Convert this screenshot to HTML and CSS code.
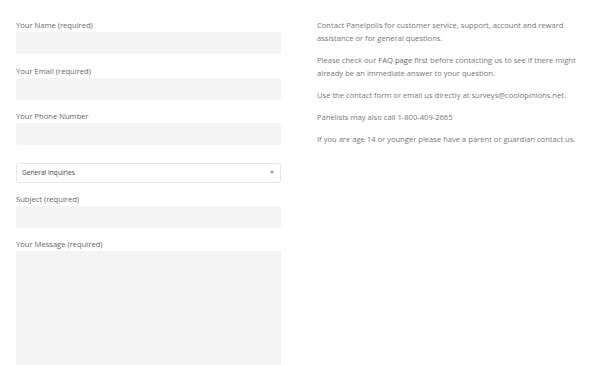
FILE: index.html
```html
<!DOCTYPE html>
<html>
<head>
<meta charset="utf-8">
<link rel="stylesheet" href="styles.css">
</head>
<body>
<div class="page">
  <form class="form">
    <div class="field">
      <label class="label">Your Name (required)</label>
      <div class="input"></div>
    </div>
    <div class="field">
      <label class="label">Your Email (required)</label>
      <div class="input"></div>
    </div>
    <div class="field">
      <label class="label">Your Phone Number</label>
      <div class="input"></div>
    </div>
    <div class="select">
      <span>General Inquiries</span>
      <span class="caret"></span>
    </div>
    <div class="field">
      <label class="label">Subject (required)</label>
      <div class="input"></div>
    </div>
    <div class="field">
      <label class="label">Your Message (required)</label>
      <div class="textarea"></div>
    </div>
  </form>
  <div class="info">
    <p>Contact Panelpolls for customer service, support, account and reward assistance or for general questions.</p>
    <p>Please check our <a class="link">FAQ page</a> first before contacting us to see if there might already be an immediate answer to your question.</p>
    <p>Use the contact form or email us directly at surveys@coolopinions.net.</p>
    <p>Panelists may also call 1-800-409-2665</p>
    <p>If you are age 14 or younger please have a parent or guardian contact us.</p>
  </div>
</div>
</body>
</html>
```
FILE: styles.css
```css
html, body {
  margin: 0;
  padding: 0;
  background: #fff;
  overflow: hidden;
  height: 365px;
}
body {
  font-family: "Open Sans", "Liberation Sans", sans-serif;
  font-size: 7.6px;
  color: #666;
}
.page {
  display: flex;
  padding: 19px 0 0 16px;
  gap: 36px;
}
.form {
  width: 265px;
  display: flex;
  flex-direction: column;
  flex-shrink: 0;
}
.field {
  display: flex;
  flex-direction: column;
  margin-bottom: 10.5px;
}
.label {
  line-height: 13px;
  color: #666;
}
.input {
  height: 22px;
  background: #f4f4f4;
  border-radius: 2px;
}
.textarea {
  height: 130px;
  background: #f4f4f4;
}
.select {
  height: 18px;
  margin: 7px 0 10px;
  border: 1px solid #e8e8e8;
  border-radius: 2px;
  display: flex;
  align-items: center;
  justify-content: space-between;
  padding: 0 6px 0 5px;
  font-size: 6.6px;
  color: #444;
}
.caret {
  width: 0;
  height: 0;
  border-left: 2.5px solid transparent;
  border-right: 2.5px solid transparent;
  border-top: 3px solid #999;
}
.info {
  width: 270px;
  color: #777;
  line-height: 13px;
}
.info p {
  margin: 0 0 9px;
}
.link {
  color: #666;
}
```
